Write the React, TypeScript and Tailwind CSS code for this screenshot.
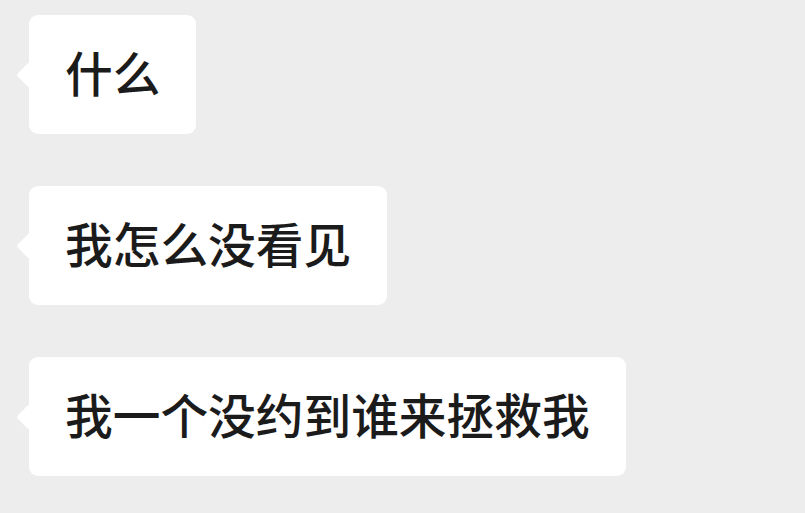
const messages = ["什么", "我怎么没看见", "我一个没约到谁来拯救我"];

function Bubble({ text }: { text: string }) {
  return (
    <div className="relative self-start">
      <span className="absolute left-[-9px] top-1/2 h-[19px] w-[19px] -translate-y-1/2 rotate-45 rounded-[3px] bg-white" />
      <div className="relative flex h-[119px] items-center rounded-[9px] bg-white px-[36px] pb-[6px] text-[47.7px] font-medium leading-none text-[#1b1b1b]">
        {text}
      </div>
    </div>
  );
}

export default function App() {
  return (
    <div
      className="flex min-h-[513px] w-full flex-col gap-[52px] bg-[#ededed] pl-[29px] pt-[15px]"
      style={{ fontFamily: '"Noto Sans CJK SC", "Noto Sans", sans-serif' }}
    >
      {messages.map((m) => (
        <Bubble key={m} text={m} />
      ))}
    </div>
  );
}
